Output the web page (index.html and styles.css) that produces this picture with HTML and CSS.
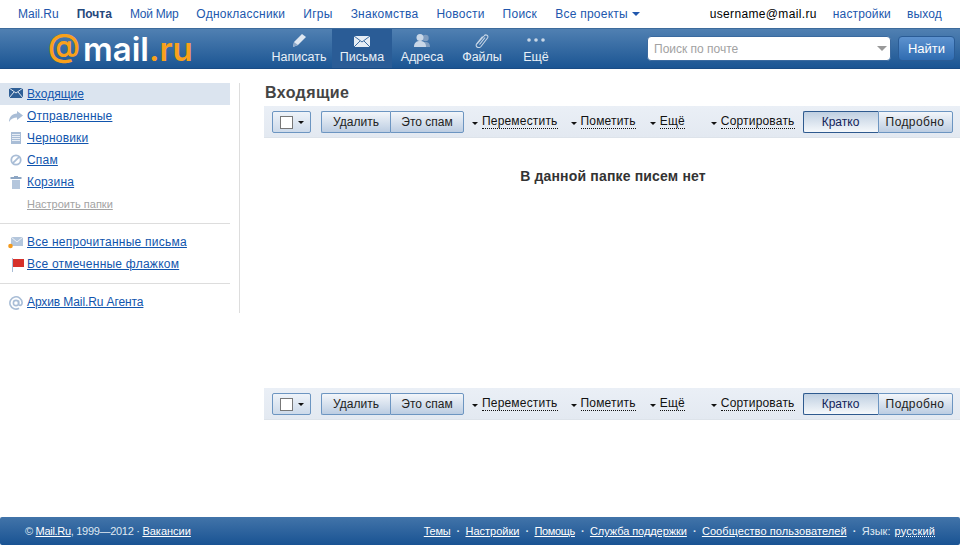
FILE: index.html
```html
<!DOCTYPE html>
<html lang="ru">
<head>
<meta charset="utf-8">
<title>Входящие - Почта Mail.Ru</title>
<link rel="stylesheet" href="styles.css">
</head>
<body>
<div class="page">
  <div class="topbar">
    <nav class="portal">
      <a href="#" class="plain">Mail.Ru</a>
      <a href="#" class="current">Почта</a>
      <a href="#" class="tight">Мой Мир</a>
      <a href="#">Одноклассники</a>
      <a href="#">Игры</a>
      <a href="#">Знакомства</a>
      <a href="#">Новости</a>
      <a href="#">Поиск</a>
      <a href="#">Все проекты <i class="caret"></i></a>
    </nav>
    <div class="account">
      <span class="user">username@mail.ru</span>
      <a href="#">настройки</a>
      <a href="#">выход</a>
    </div>
  </div>

  <header class="header">
    <a href="#" class="logo"><span class="logo-at">@</span><span class="logo-word">mail</span><span class="logo-ru">.ru</span></a>
    <nav class="tools">
      <a href="#" class="tool tool-first">
        <svg width="18" height="14" viewBox="0 0 18 14"><path d="M12 0l4 3-8 8-5 2 1-5z" fill="#dfe8f2"/><path d="M3 13l1-5 4 3z" fill="#8fa9c8"/></svg>
        <span>Написать</span>
      </a>
      <a href="#" class="tool active">
        <svg width="18" height="14" viewBox="0 0 18 14"><rect x="1" y="2" width="16" height="11" fill="#e6edf5"/><path d="M1 2l8 6 8-6M1 13l6-6M17 13l-6-6" fill="none" stroke="#3b6a9f"/></svg>
        <span>Письма</span>
      </a>
      <a href="#" class="tool">
        <svg width="18" height="14" viewBox="0 0 18 14"><circle cx="12.5" cy="4" r="3.2" fill="#7f9dc0"/><path d="M8 13c0-4 2-5 4.500-5s4.500 1 4.500 5z" fill="#7f9dc0"/><circle cx="7" cy="3.500" r="3.500" fill="#c9d7e7"/><path d="M1 13c0-5 3-6 6-6s6 1 6 6z" fill="#c9d7e7"/></svg>
        <span>Адреса</span>
      </a>
      <a href="#" class="tool">
        <svg width="18" height="14" viewBox="0 0 18 14"><path d="M4 10l7-8c1.800-2.200 5-.5 3.500 2L8 12.500c-2 2.200-6 .5-4.500-2.500l6-7.500M6.500 10.500l5.500-7" fill="none" stroke="#c9d7e7" stroke-width="1.100"/></svg>
        <span>Файлы</span>
      </a>
      <a href="#" class="tool tool-last">
        <svg width="20" height="14" viewBox="0 0 20 14"><circle cx="3" cy="6" r="1.800" fill="#c9d7e7"/><circle cx="10" cy="6" r="1.800" fill="#c9d7e7"/><circle cx="17" cy="6" r="1.800" fill="#c9d7e7"/></svg>
        <span>Ещё</span>
      </a>
    </nav>
    <form class="search">
      <div class="search-field"><span>Поиск по почте</span><i class="search-caret"></i></div>
      <button type="button" class="search-btn">Найти</button>
    </form>
  </header>

  <div class="content">
    <aside class="sidebar">
      <ul class="folders">
        <li class="folder selected">
          <svg width="14" height="10" viewBox="0 0 14 10"><rect width="14" height="10" fill="#2f5f96"/><path d="M0 0l7 5 7-5M0 10l5-6M14 10L9 4" fill="none" stroke="#dfe7f0"/></svg>
          <a href="#">Входящие</a>
        </li>
        <li class="folder">
          <svg width="14" height="12" viewBox="0 0 14 12"><path d="M8 1l6 4.500L8 10V7.500C5 7.500 2 8.500 0 12 0 7 3 4 8 3.500z" fill="#a9bdd6"/></svg>
          <a href="#">Отправленные</a>
        </li>
        <li class="folder">
          <svg width="14" height="12" viewBox="0 0 14 12"><rect x="2" width="10" height="12" fill="#a9bdd6"/><path d="M3 2.500h8M3 4.500h8M3 6.500h8M3 8.500h8" stroke="#e8eef6"/></svg>
          <a href="#">Черновики</a>
        </li>
        <li class="folder">
          <svg width="14" height="12" viewBox="0 0 14 12"><circle cx="7" cy="6" r="4.700" fill="none" stroke="#a9bdd6" stroke-width="1.800"/><path d="M3.800 9.200L10.200 2.800" stroke="#a9bdd6" stroke-width="1.800"/></svg>
          <a href="#">Спам</a>
        </li>
        <li class="folder">
          <svg width="14" height="13" viewBox="0 0 14 13"><rect x="1.500" y="1" width="11" height="2" fill="#8da6c4"/><rect x="5" width="4" height="1" fill="#8da6c4"/><path d="M3 4h8v9H3z" fill="#b4c6dc"/></svg>
          <a href="#">Корзина</a>
        </li>
        <li class="folder folder-setup"><a href="#">Настроить папки</a></li>
      </ul>
      <ul class="folders folders-divided">
        <li class="folder">
          <svg class="icon-unread" width="16" height="13" viewBox="0 0 16 13"><rect x="3" y="1" width="12" height="9" fill="#b4c6dc"/><path d="M3 1l6 5 6-5" fill="none" stroke="#eef2f7"/><circle cx="2.500" cy="10" r="2.300" fill="#f39a1d"/></svg>
          <a href="#" class="wide">Все непрочитанные письма</a>
        </li>
        <li class="folder">
          <svg width="16" height="14" viewBox="0 0 16 14"><rect x="3" y="0" width="1" height="14" fill="#a9bdd6"/><rect x="4" y="1" width="11" height="8" fill="#d6312b"/></svg>
          <a href="#" class="wide">Все отмеченные флажком</a>
        </li>
      </ul>
      <ul class="folders folders-divided">
        <li class="folder">
          <svg width="14" height="14" viewBox="0 0 16 16"><circle cx="8" cy="8" r="3" fill="none" stroke="#a9bdd6" stroke-width="1.800"/><path d="M11 5v4c0 2.500 4 2.500 4-1.500A7 7 0 1 0 11.500 14" fill="none" stroke="#a9bdd6" stroke-width="1.800"/></svg>
          <a href="#" class="narrow">Архив Mail.Ru Агента</a>
        </li>
      </ul>
    </aside>

    <main class="main">
      <h1 class="title">Входящие</h1>
      <div class="toolbar">
        <button type="button" class="btn btn-check"><i class="checkbox"></i><i class="arrow"></i></button>
        <div class="btn-group">
          <button type="button" class="btn btn-delete">Удалить</button>
          <button type="button" class="btn btn-spam">Это спам</button>
        </div>
        <a href="#" class="action action-move"><i class="arrow"></i><span>Переместить</span></a>
        <a href="#" class="action action-mark"><i class="arrow"></i><span>Пометить</span></a>
        <a href="#" class="action"><i class="arrow"></i><span>Ещё</span></a>
        <a href="#" class="action action-sort"><i class="arrow"></i><span>Сортировать</span></a>
        <div class="btn-group view">
          <button type="button" class="btn btn-view on">Кратко</button>
          <button type="button" class="btn btn-view">Подробно</button>
        </div>
      </div>
      <p class="empty">В данной папке писем нет</p>
      <div class="toolbar">
        <button type="button" class="btn btn-check"><i class="checkbox"></i><i class="arrow"></i></button>
        <div class="btn-group">
          <button type="button" class="btn btn-delete">Удалить</button>
          <button type="button" class="btn btn-spam">Это спам</button>
        </div>
        <a href="#" class="action action-move"><i class="arrow"></i><span>Переместить</span></a>
        <a href="#" class="action action-mark"><i class="arrow"></i><span>Пометить</span></a>
        <a href="#" class="action"><i class="arrow"></i><span>Ещё</span></a>
        <a href="#" class="action action-sort"><i class="arrow"></i><span>Сортировать</span></a>
        <div class="btn-group view">
          <button type="button" class="btn btn-view on">Кратко</button>
          <button type="button" class="btn btn-view">Подробно</button>
        </div>
      </div>
    </main>
  </div>

  <footer class="footer">
    <div class="copy">© <a href="#">Mail.Ru</a>, 1999—2012 · <a href="#" class="jobs">Вакансии</a></div>
    <div class="foot-links">
      <a href="#" class="fl-themes">Темы</a><b>·</b>
      <a href="#">Настройки</a><b>·</b>
      <a href="#" class="fl-help">Помощь</a><b>·</b>
      <a href="#" class="fl-support">Служба поддержки</a><b>·</b>
      <a href="#" class="fl-community">Сообщество пользователей</a><b>·</b>
      <span class="fl-lang">Язык: <a href="#" class="lang">русский</a></span>
    </div>
  </footer>
</div>
</body>
</html>
```
FILE: styles.css
```css
* { box-sizing: border-box; }
html, body { margin: 0; padding: 0; background: #fff; }
body { font: 12px/14px "Liberation Sans", Arial, sans-serif; color: #333; overflow: hidden; }
a { color: inherit; }
ul { list-style: none; margin: 0; padding: 0; }
i { display: inline-block; }
.page { width: 960px; height: 550px; display: flex; flex-direction: column; }

.topbar { height: 28px; flex: none; display: flex; justify-content: space-between; align-items: center; padding: 0 18px; }
.portal { display: flex; gap: 18px; }
.portal a, .account a { color: #2157ad; text-decoration: none; }
.portal a { letter-spacing: .25px; }
.portal a.plain { letter-spacing: 0; }
.portal a.current { color: #26487c; font-weight: bold; letter-spacing: 0; }
.portal a.tight { letter-spacing: -.25px; }
.caret { width: 0; height: 0; border: 4px solid transparent; border-top-color: #2157ad; border-bottom: 0; vertical-align: 2px; }
.account { display: flex; gap: 16px; letter-spacing: .15px; }
.user { color: #000; letter-spacing: .35px; }

.header { height: 41px; flex: none; display: flex; background: linear-gradient(#5080b2, #1b5593); border-top: 1px solid #3d6b9c; border-bottom: 1px solid #1a4c85; }
.logo { width: 266px; flex: none; padding-left: 48px; display: flex; align-items: center; text-decoration: none; font-family: Inter, sans-serif; font-size: 33px; line-height: 40px; font-weight: 600; }
.logo-at { color: #f9a11b; font-size: 32px; margin: 0 3px 5px 0; }
.logo-word { color: #fff; }
.logo-ru { color: #f9a11b; }

.tools { display: flex; }
.tool { width: 60px; display: flex; flex-direction: column; align-items: center; color: #e9f0f7; text-decoration: none; padding-top: 5px; font-size: 12.500px; line-height: 15px; }
.tool svg { margin-bottom: 2px; }
.tool span { white-space: nowrap; }
.tool-first { width: 66px; }
.tool-last { width: 48px; }
.tool.active { background: #2a5c96; }

.search { display: flex; margin-left: 87px; padding-top: 7px; gap: 7px; }
.search-field { width: 244px; height: 25px; background: #fff; border: 1px solid #3b6a9f; border-radius: 4px; display: flex; align-items: center; justify-content: space-between; padding: 0 3px 0 6px; color: #a2a2a2; }
.search-caret { width: 0; height: 0; border: 5px solid transparent; border-top-color: #999; border-bottom: 0; }
.search-btn { width: 57px; height: 25px; padding: 0; background: linear-gradient(#5d92cf, #2f6cb1); border: 1px solid #2a5c96; border-radius: 4px; color: #fff; font: 13px "Liberation Sans", Arial, sans-serif; }

.content { flex: 1; display: flex; align-items: flex-start; min-height: 0; }
.sidebar { width: 240px; flex: none; margin-top: 14px; padding-right: 9px; border-right: 1px solid #ddd; }
.folder { height: 22px; display: flex; align-items: center; padding-left: 27px; position: relative; }
.folder svg { position: absolute; left: 9px; top: 5px; }
.folder svg.icon-unread { left: 8px; }
.folder a { color: #1155ad; text-decoration: underline; letter-spacing: .2px; }
.folder a.wide { letter-spacing: .24px; }
.folder a.narrow { letter-spacing: -.1px; }
.folder.selected { background: #dbe4ef; }
.folder.selected a { letter-spacing: 0; }
.folder-setup { font-size: 11px; }
.folder-setup a { color: #a3a3a3; letter-spacing: 0; }
.folders-divided { border-top: 1px solid #ddd; padding-top: 7px; margin-top: 8px; }

.main { flex: 1; min-width: 0; padding-left: 24px; }
.title { font-size: 16px; line-height: 19px; margin: 14px 0 4px 1px; color: #444; letter-spacing: .4px; }
.toolbar { height: 32px; display: flex; align-items: flex-start; padding: 5px 7px 0 8px; background: linear-gradient(#eaeff6, #e3e9f1); border-bottom: 1px solid #dde3ea; }
.btn { height: 22px; padding: 0; font: 12px "Liberation Sans", Arial, sans-serif; color: #222; background: linear-gradient(#f3f6fa, #bccde2); border: 1px solid #6c95c1; border-radius: 2px; }
.btn-check { width: 39px; display: flex; align-items: center; justify-content: center; gap: 5px; background: linear-gradient(#eef3f9, #cddaea); margin-right: 10px; }
.checkbox { width: 13px; height: 13px; background: #fff; border: 1px solid #777; }
.arrow { width: 0; height: 0; border: 3.500px solid transparent; border-top-color: #111; border-bottom: 0; }
.btn-group { display: flex; flex: none; }
.btn-group .btn:first-child { border-right: 0; border-radius: 2px 0 0 2px; }
.btn-group .btn:last-child { border-radius: 0 2px 2px 0; }
.btn-delete { width: 69px; }
.btn-spam { width: 74px; }
.action { display: flex; align-items: center; gap: 4px; height: 22px; color: #111; text-decoration: none; margin-left: 14px; }
.action .arrow { margin-top: 3px; }
.action span { border-bottom: 1px dotted #111; line-height: 13px; letter-spacing: .18px; }
.action-move { margin-left: 8px; }
.action-mark { margin-left: 13px; }
.action-sort { margin-left: 26px; }
.view { margin-left: 8px; }
.btn-view { width: 75px; letter-spacing: .4px; }
.btn-view.on { background: linear-gradient(#bfcfe1, #f5f8fb); border-color: #2e5a8f; color: #12235a; border-right: 1px solid #2e5a8f; letter-spacing: 0; }
.empty { margin: 30px 0 204px; height: 16px; text-align: center; font-size: 14px; line-height: 16px; font-weight: bold; color: #333; letter-spacing: .17px; padding-left: 2px; }

.footer { height: 28px; flex: none; margin-bottom: 5px; display: flex; justify-content: space-between; align-items: center; padding: 0 25px; background: linear-gradient(#4274a9, #195393); color: #dfe8f2; font-size: 11px; border-radius: 2px; }
.footer a { color: #fff; }
.copy { letter-spacing: -.3px; }
.copy .jobs { letter-spacing: 0; }
.foot-links { display: flex; gap: 6px; }
.foot-links b { font-weight: bold; width: 3px; }
.fl-themes { letter-spacing: -.25px; }
.fl-help { letter-spacing: -.33px; }
.fl-support { letter-spacing: -.06px; }
.fl-community { letter-spacing: .08px; }
.fl-lang { word-spacing: 1px; }
.foot-links .lang { text-decoration: underline dotted; letter-spacing: .14px; }
```
